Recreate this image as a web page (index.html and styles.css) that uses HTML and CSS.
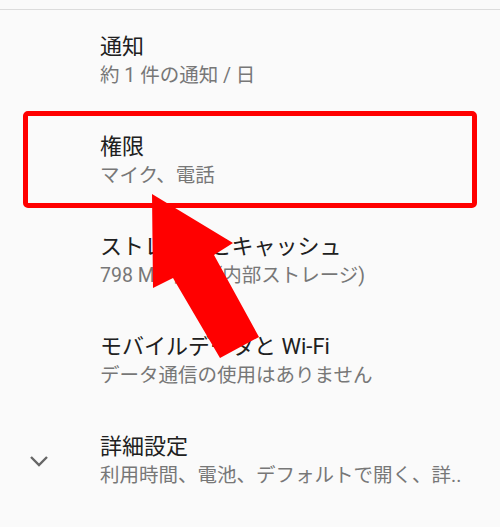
FILE: index.html
```html
<!DOCTYPE html>
<html lang="ja">
<head>
<meta charset="utf-8">
<link rel="stylesheet" href="styles.css">
</head>
<body>
<div class="screen">
  <div class="divider"></div>
  <div class="list">
    <div class="row">
      <div class="icon"></div>
      <div class="text">
        <div class="title">通知</div>
        <div class="sub">約 1 件の通知 / 日</div>
      </div>
    </div>
    <div class="row">
      <div class="icon"></div>
      <div class="text">
        <div class="title">権限</div>
        <div class="sub">マイク、電話</div>
      </div>
    </div>
    <div class="row">
      <div class="icon"></div>
      <div class="text">
        <div class="title">ストレージとキャッシュ</div>
        <div class="sub">798 MB 使用 (内部ストレージ)</div>
      </div>
    </div>
    <div class="row">
      <div class="icon"></div>
      <div class="text">
        <div class="title">モバイルデータと Wi-Fi</div>
        <div class="sub">データ通信の使用はありません</div>
      </div>
    </div>
    <div class="row">
      <div class="icon">
        <svg class="chev" width="20" height="12" viewBox="0 0 20 12"><path d="M2 2 L10 10 L18 2" fill="none" stroke="#666" stroke-width="2.4"/></svg>
      </div>
      <div class="text">
        <div class="title">詳細設定</div>
        <div class="sub">利用時間、電池、デフォルトで開く、詳..</div>
      </div>
    </div>
  </div>
  <div class="highlight"></div>
  <svg class="arrow" width="500" height="527" viewBox="0 0 500 527">
    <polygon points="152,194 233,243 214,255 259,337 220,358 173,278 153,288" fill="#ff0000"/>
  </svg>
</div>
</body>
</html>
```
FILE: styles.css
```css
html, body {
  margin: 0;
  padding: 0;
  background: #fafafa;
}
.screen {
  position: relative;
  width: 500px;
  height: 527px;
  overflow: hidden;
  padding-top: 9px;
  box-sizing: border-box;
  font-family: Roboto, "Noto Sans CJK JP", sans-serif;
}
.divider {
  height: 1px;
  background: #dcdcdc;
  margin-bottom: 1px;
}
.list {
  display: flex;
  flex-direction: column;
}
.row {
  height: 100px;
  display: flex;
  align-items: center;
}
.icon {
  width: 100px;
  display: flex;
  justify-content: center;
  padding-right: 22px;
  box-sizing: border-box;
}
.text {
  display: flex;
  flex-direction: column;
}
.title {
  font-size: 22px;
  line-height: 29px;
  color: #202020;
}
.sub {
  font-size: 19.5px;
  line-height: 29px;
  color: #777777;
}
.highlight {
  position: absolute;
  left: 23px;
  top: 111px;
  width: 454px;
  height: 97px;
  border: 5px solid #ff0000;
  border-radius: 5px;
  box-sizing: border-box;
}
.arrow {
  position: absolute;
  left: 0;
  top: 0;
}
```
